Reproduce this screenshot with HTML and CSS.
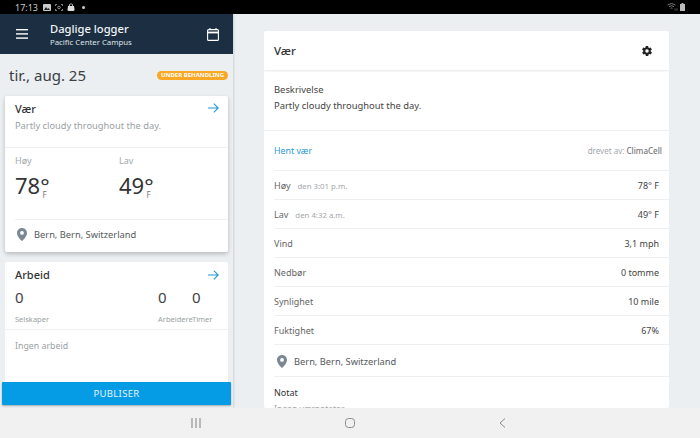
FILE: index.html
```html
<!DOCTYPE html>
<html>
<head>
  <title>Daglige logger</title>
  <link rel="stylesheet" href="styles.css">
</head>
<body>
  <!-- Status bar -->
  <div class="status-bar">
    <div class="status-left">
      <span class="status-time">17:13</span>
      <svg width="8" height="7" viewBox="0 0 8 7"><rect width="8" height="7" rx="1" fill="#ccc"/><path d="M1 6l2-3 1.500 2 1-1L7 6z" fill="#222"/></svg>
      <svg width="8" height="7" viewBox="0 0 8 7" fill="none" stroke="#aaa" stroke-width="0.8"><path d="M0.500 2V0.500H2M6 0.500h1.500V2M0.500 5v1.500H2M6 6.500h1.500V5"/><circle cx="4" cy="3.500" r="1.300"/></svg>
      <svg width="8" height="8" viewBox="0 0 8 8"><path d="M1 3h6l0.500 3.500Q7.500 8 6 8H2Q0.500 8 0.500 6.500z" fill="#ddd"/><path d="M2.500 3V1.500Q4 0 5.500 1.500V3" fill="none" stroke="#ddd" stroke-width="0.8"/></svg>
      <span class="status-dot"></span>
    </div>
    <div class="status-right">
      <svg width="11" height="8" viewBox="0 0 11 8" fill="none" stroke="#999" stroke-width="0.8"><path d="M0.500 2Q4.500-1 8.500 2M2 3.700Q4.500 1.700 7 3.700M3.500 5.300Q4.500 4.500 5.500 5.300"/><path d="M8 5.500v2M10 5.500v2" stroke="#777"/></svg>
      <svg width="5" height="8" viewBox="0 0 5 8"><rect y="1" width="5" height="7" fill="#bbb"/><rect x="1.500" width="2" height="1" fill="#bbb"/></svg>
    </div>
  </div>

  <div class="main">
    <!-- Left panel -->
    <div class="side">
      <div class="side-header">
        <svg class="menu-icon" width="12" height="10" viewBox="0 0 12 10" fill="#fff"><rect width="12" height="1.400"/><rect y="4.200" width="12" height="1.400"/><rect y="8.400" width="12" height="1.400"/></svg>
        <div class="side-titles">
          <div class="side-title">Daglige logger</div>
          <div class="side-sub">Pacific Center Campus</div>
        </div>
        <svg class="cal-icon" width="12" height="13" viewBox="0 0 12 13" fill="none" stroke="#fff" stroke-width="1.100"><rect x="0.600" y="1.600" width="10.800" height="10.800" rx="1"/><path d="M0.600 4.500h10.800" stroke-width="1.800"/><path d="M3 0v2M9 0v2"/></svg>
      </div>

      <div class="date-row">
        <span class="date">tir., aug. 25</span>
        <span class="badge">UNDER BEHANDLING</span>
      </div>

      <div class="card weather-card">
        <div class="card-top">
          <div class="card-head">
            <span class="card-title">Vær</span>
            <svg class="arrow" width="11" height="10" viewBox="0 0 11 10" fill="none" stroke="#1f9ad6" stroke-width="1.100"><path d="M0 5h10M5.800 0.600L10.200 5 5.800 9.400"/></svg>
          </div>
          <div class="card-desc">Partly cloudy throughout the day.</div>
        </div>
        <div class="temps">
          <div class="temp">
            <div class="temp-label">Høy</div>
            <div class="temp-value">78°<span class="temp-unit">F</span></div>
          </div>
          <div class="temp">
            <div class="temp-label">Lav</div>
            <div class="temp-value">49°<span class="temp-unit">F</span></div>
          </div>
        </div>
        <div class="card-loc">
          <svg width="10" height="13" viewBox="0 0 10 13"><path fill-rule="evenodd" fill="#7b8893" d="M5 0C2.200 0 0 2.200 0 4.900 0 8.500 5 13 5 13s5-4.500 5-8.100C10 2.200 7.800 0 5 0zm0 6.800a1.900 1.900 0 1 1 0-3.800 1.900 1.900 0 0 1 0 3.800z"/></svg>
          <span>Bern, Bern, Switzerland</span>
        </div>
      </div>

      <div class="card work-card">
        <div class="card-head">
          <span class="card-title">Arbeid</span>
          <svg class="arrow" width="11" height="10" viewBox="0 0 11 10" fill="none" stroke="#1f9ad6" stroke-width="1.100"><path d="M0 5h10M5.800 0.600L10.200 5 5.800 9.400"/></svg>
        </div>
        <div class="counts">
          <div class="count count-grow"><div class="count-num">0</div><div class="count-label">Selskaper</div></div>
          <div class="count count-workers"><div class="count-num">0</div><div class="count-label">Arbeidere</div></div>
          <div class="count count-hours"><div class="count-num">0</div><div class="count-label">Timer</div></div>
        </div>
        <div class="no-work">Ingen arbeid</div>
      </div>

      <button class="publish">PUBLISER</button>
    </div>

    <!-- Right panel -->
    <div class="detail">
      <div class="detail-card">
        <div class="detail-head">
          <span>Vær</span>
          <svg width="12" height="12" viewBox="0 0 24 24" fill="#222"><path d="M19.400 13c.1-.3.1-.7.1-1s0-.7-.1-1l2.100-1.600c.2-.2.2-.4.100-.6l-2-3.500c-.1-.2-.4-.3-.6-.2l-2.500 1c-.5-.4-1.100-.7-1.700-1l-.4-2.600c0-.3-.2-.5-.5-.5h-4c-.3 0-.5.200-.5.500l-.4 2.600c-.6.300-1.200.6-1.700 1l-2.500-1c-.2-.1-.5 0-.6.200l-2 3.500c-.1.200-.1.500.1.600L4.600 11c-.1.300-.1.700-.1 1s0 .7.1 1l-2.100 1.600c-.2.200-.2.400-.1.600l2 3.500c.1.200.4.300.6.200l2.500-1c.5.400 1.100.7 1.700 1l.4 2.600c0 .3.200.5.500.5h4c.3 0 .5-.2.500-.5l.4-2.600c.6-.3 1.200-.6 1.700-1l2.500 1c.2.100.5 0 .6-.2l2-3.500c.1-.2.100-.5-.1-.6zM12 15.500a3.500 3.500 0 1 1 0-7 3.500 3.500 0 0 1 0 7z"/></svg>
        </div>
        <div class="desc-block">
          <div class="desc-label">Beskrivelse</div>
          <div class="desc-text">Partly cloudy throughout the day.</div>
        </div>
        <div class="rows">
          <div class="fetch-row">
            <span class="fetch-link">Hent vær</span>
            <span class="powered">drevet av: <b>ClimaCell</b></span>
          </div>
          <div class="row"><span>Høy<small>den 3:01 p.m.</small></span><span class="val">78° F</span></div>
          <div class="row"><span>Lav<small>den 4:32 a.m.</small></span><span class="val">49° F</span></div>
          <div class="row"><span>Vind</span><span class="val">3,1 mph</span></div>
          <div class="row"><span>Nedbør</span><span class="val">0 tomme</span></div>
          <div class="row"><span>Synlighet</span><span class="val">10 mile</span></div>
          <div class="row"><span>Fuktighet</span><span class="val">67%</span></div>
          <div class="loc-row">
            <svg width="10" height="13" viewBox="0 0 10 13"><path fill-rule="evenodd" fill="#7b8893" d="M5 0C2.200 0 0 2.200 0 4.900 0 8.500 5 13 5 13s5-4.500 5-8.100C10 2.200 7.800 0 5 0zm0 6.800a1.900 1.900 0 1 1 0-3.800 1.900 1.900 0 0 1 0 3.800z"/></svg>
            <span>Bern, Bern, Switzerland</span>
          </div>
        </div>
        <div class="note">
          <div class="note-title">Notat</div>
          <div class="note-text">Ingen værnotater</div>
        </div>
      </div>
    </div>
  </div>

  <!-- Android nav bar -->
  <div class="nav-bar">
    <svg width="10" height="10" viewBox="0 0 10 10" stroke="#8a8a8a" stroke-width="1.100"><path d="M1 0v10M5 0v10M9 0v10"/></svg>
    <svg width="10" height="10" viewBox="0 0 10 10" fill="none" stroke="#8a8a8a" stroke-width="1"><rect x="0.500" y="0.500" width="9" height="9" rx="3"/></svg>
    <svg width="7" height="10" viewBox="0 0 7 10" fill="none" stroke="#8a8a8a" stroke-width="1"><path d="M6 0.500L1 5l5 4.500"/></svg>
  </div>
</body>
</html>
```

FILE: styles.css
```css
/* Global Styles */
html, body {
  margin: 0;
  height: 100%;
}
body {
  width: 700px;
  height: 438px;
  overflow: hidden;
  display: flex;
  flex-direction: column;
  background-color: #ebeff2;
  font-family: "Noto Sans", Arial, sans-serif;
  color: #3c3c3c;
}
small {
  font-size: 9px;
}

/* Status bar */
.status-bar {
  height: 14px;
  flex: none;
  background-color: #000;
  display: flex;
  justify-content: space-between;
  align-items: center;
  padding: 0 15px;
}
.status-left {
  display: flex;
  align-items: center;
  gap: 4px;
}
.status-time {
  font-size: 9px;
  color: #c8c8c8;
  margin-right: 1px;
}
.status-dot {
  width: 3px;
  height: 3px;
  margin-left: 3px;
  border-radius: 50%;
  background-color: #ccc;
}
.status-right {
  display: flex;
  align-items: center;
  gap: 2px;
}

/* Layout */
.main {
  flex: 1;
  min-height: 0;
  display: flex;
  overflow: hidden;
}
.side {
  width: 233px;
  flex: none;
  position: relative;
  background-color: #ebeff2;
  box-shadow: 1px 0 2px rgba(0, 0, 0, 0.12);
}
.detail {
  flex: 1;
  padding: 17px 31px 0;
}

/* Left header */
.side-header {
  height: 40px;
  background-color: #1c2e42;
  display: flex;
  align-items: center;
  padding: 0 14px 0 16px;
  color: #fff;
}
.side-titles {
  flex: 1;
  margin-left: 22px;
  padding-top: 1px;
}
.side-title {
  font-size: 11.200px;
  font-weight: 500;
  line-height: 15px;
  color: #f2f4f6;
}
.side-sub {
  font-size: 7.800px;
  line-height: 12px;
  color: #dfe4e8;
}
.date-row {
  height: 42px;
  display: flex;
  justify-content: space-between;
  align-items: center;
  padding: 0 5px 0 9px;
}
.date {
  font-size: 15px;
  color: #3c4043;
}
.badge {
  background-color: #f9a825;
  color: #fff;
  font-size: 6px;
  font-weight: 700;
  line-height: 9px;
  padding: 0 4px;
  border-radius: 5px;
}

/* Left cards */
.card {
  margin: 0 5px;
  background-color: #fff;
  border-radius: 2px;
}
.weather-card {
  height: 156px;
  margin-bottom: 10px;
  box-shadow: 0 2px 4px rgba(0, 0, 0, 0.22);
  display: flex;
  flex-direction: column;
}
.card-top {
  height: 51px;
  padding: 0 9px 0 10px;
  border-bottom: 1px solid #edf0f2;
}
.card-head {
  display: flex;
  justify-content: space-between;
  align-items: center;
  height: 24px;
}
.card-title {
  font-size: 11px;
  font-weight: 500;
  color: #333;
}
.card-desc {
  font-size: 9.300px;
  color: #9a9fa3;
  line-height: 12px;
}
.temps {
  height: 72px;
  margin-left: 10px;
  border-bottom: 1px solid #edf0f2;
  display: flex;
  padding-top: 7px;
  box-sizing: border-box;
}
.temp {
  width: 104px;
}
.temp-label {
  font-size: 9px;
  line-height: 12px;
  color: #a3a7aa;
}
.temp-value {
  font-size: 22px;
  line-height: 30px;
  margin-top: 3px;
  color: #333;
}
.temp-unit {
  font-size: 8px;
  line-height: 8px;
  color: #777;
  margin-left: -7px;
  vertical-align: -4px;
}
.card-loc {
  flex: 1;
  margin-left: 12px;
  padding-bottom: 4px;
  display: flex;
  align-items: center;
  gap: 7px;
  font-size: 9.300px;
  color: #55595c;
}
.work-card {
  height: 130px;
}
.work-card .card-head {
  height: 25px;
  padding: 0 9px 0 10px;
}
.counts {
  display: flex;
  height: 42px;
  padding: 0 14px 0 10px;
  border-bottom: 1px solid #eff1f3;
}
.count-grow {
  flex: 1;
}
.count-workers {
  width: 34px;
}
.count-hours {
  width: 22px;
}
.count-num {
  font-size: 15px;
  line-height: 20px;
  color: #444;
}
.count-label {
  font-size: 7.500px;
  line-height: 12px;
  margin-top: 6px;
  color: #9a9fa3;
  white-space: nowrap;
}
.no-work {
  font-size: 8.800px;
  color: #9a9fa3;
  padding: 10px 10px;
}
.publish {
  position: absolute;
  left: 2px;
  right: 2px;
  bottom: 3px;
  height: 23px;
  border: none;
  border-radius: 1px;
  background-color: #069be5;
  color: #e4f4fc;
  font-family: inherit;
  font-size: 9.500px;
  letter-spacing: 0.3px;
  box-shadow: 0 1px 2px rgba(0, 0, 0, 0.3);
}

/* Right card */
.detail-card {
  height: 377px;
  overflow: hidden;
  background-color: #fff;
  border-radius: 2px;
}
.detail-head {
  height: 39px;
  display: flex;
  justify-content: space-between;
  align-items: center;
  padding: 0 16px 0 10px;
  font-size: 11.500px;
  font-weight: 500;
  color: #333;
  box-shadow: 0 1px 2px rgba(0, 0, 0, 0.1);
}
.desc-block {
  height: 61px;
  padding-top: 12px;
  box-sizing: border-box;
  padding-left: 10px;
  border-bottom: 1px solid #edf0f2;
  font-size: 9.400px;
  line-height: 16px;
  color: #444;
}
.rows {
  margin-left: 10px;
}
.fetch-row {
  height: 39px;
  display: flex;
  justify-content: space-between;
  align-items: center;
  padding-right: 7px;
  border-bottom: 1px solid #edf0f2;
  font-size: 8.800px;
}
.fetch-link {
  color: #1f9ad6;
}
.powered {
  font-size: 8px;
  color: #a3a7aa;
}
.powered b {
  color: #777;
  font-weight: 500;
}
.row {
  height: 28px;
  display: flex;
  justify-content: space-between;
  align-items: center;
  padding-right: 10px;
  border-bottom: 1px solid #edf0f2;
  font-size: 9px;
  color: #666;
}
.row small {
  font-size: 7.800px;
  color: #a3a7aa;
  margin-left: 7px;
}
.val {
  color: #444;
}
.loc-row {
  height: 29px;
  padding-top: 2px;
  display: flex;
  align-items: center;
  gap: 7px;
  padding-left: 3px;
  border-bottom: 1px solid #edf0f2;
  font-size: 9.300px;
  color: #55595c;
}
.note {
  padding: 9px 0 0 10px;
}
.note-title {
  font-size: 9px;
  line-height: 13px;
  color: #333;
}
.note-text {
  font-size: 8.500px;
  line-height: 12px;
  margin-top: 4px;
  color: #a3a7aa;
}

/* Nav bar */
.nav-bar {
  height: 30px;
  flex: none;
  background-color: #f1f1f1;
  display: flex;
  align-items: center;
  justify-content: center;
  gap: 144px;
  padding-right: 3px;
}
```
